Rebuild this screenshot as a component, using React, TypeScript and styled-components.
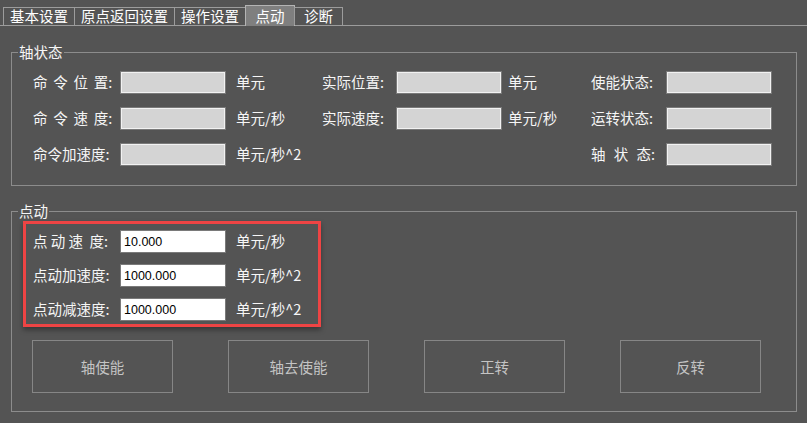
import React from "react";
import styled, { createGlobalStyle } from "styled-components";

const GlobalStyle = createGlobalStyle`
  html, body {
    margin: 0;
    padding: 0;
    background: #545454;
  }
  body {
    font-family: "Noto Sans CJK SC", "Noto Sans", sans-serif;
  }
`;

const Window = styled.div`
  width: 807px;
  height: 423px;
  box-sizing: border-box;
  padding-top: 5px;
  background: #545454;
  color: #f6f6f6;
  font-size: 14.5px;
  overflow: hidden;
`;

const TabBar = styled.div`
  display: flex;
  align-items: flex-end;
  height: 20px;
  padding-left: 3px;
  border-bottom: 1px solid #9c9c9c;
`;

const Tab = styled.div<{ $active?: boolean }>`
  box-sizing: border-box;
  height: ${p => (p.$active ? 21 : 18)}px;
  margin-bottom: ${p => (p.$active ? -1 : 0)}px;
  margin-right: -1px;
  min-width: ${p => (p.$active ? 50 : 49)}px;
  padding: 0 6px;
  display: flex;
  align-items: center;
  justify-content: center;
  border: 1px solid ${p => (p.$active ? "#b4b4b4" : "#9c9c9c")};
  border-bottom: none;
  background: ${p => (p.$active ? "#7f7f7f" : "transparent")};
  color: #fff;
  line-height: 1;
  white-space: nowrap;
  position: relative;
`;

const Group = styled.fieldset<{ $top: number; $pt: number; $pb: number }>`
  box-sizing: border-box;
  width: 786px;
  min-width: 0;
  margin: ${p => p.$top}px 0 0 11px;
  padding: ${p => p.$pt}px 0 ${p => p.$pb}px 6px;
  border: 1px solid #8c8c8c;
`;

const Legend = styled.legend`
  padding: 0 1px;
  line-height: 16px;
  font-size: 14.5px;
  color: #f6f6f6;
`;

const StatusGrid = styled.div`
  margin-left: 15px;
  display: grid;
  grid-template-columns: 87px 106px 96px 74px 106px 89px 75px 106px;
  grid-auto-rows: 23px;
  row-gap: 13px;
  align-items: center;
`;

const Label = styled.span<{ $ws?: number }>`
  white-space: pre;
  word-spacing: ${p => p.$ws ?? 0}px;
  line-height: 1;
`;

const Unit = styled.span<{ $pad?: number }>`
  padding-left: ${p => p.$pad ?? 10}px;
  white-space: nowrap;
  line-height: 1;
`;

const Field = styled.input<{ $editable?: boolean }>`
  box-sizing: border-box;
  width: 106px;
  height: 23px;
  margin: 0;
  padding: 0 0 0 3px;
  border: 1px solid #7a7a7a;
  box-shadow: inset 0 0 0 1px ${p => (p.$editable ? "#ffffff" : "#f2f2f2")};
  background: ${p => (p.$editable ? "#ffffff" : "#d4d4d4")};
  color: #000;
  font-family: "Liberation Sans", Arial, sans-serif;
  font-size: 12.5px;
  outline: none;
`;

const Empty = styled.span``;

const Highlight = styled.div`
  box-sizing: border-box;
  width: 298px;
  margin: 0 0 0 5px;
  padding: 6px 0 3px 7px;
  border: 3px solid #ee4444;
  box-shadow: 0 3px 5px rgba(0, 0, 0, 0.35);
  display: grid;
  grid-template-columns: 87px 106px auto;
  grid-auto-rows: 23px;
  row-gap: 11px;
  align-items: center;
`;

const ButtonRow = styled.div`
  display: flex;
  gap: 55px;
  margin: 13px 0 0 14px;
`;

const ActionButton = styled.button`
  box-sizing: border-box;
  width: 141px;
  height: 53px;
  margin: 0;
  padding: 0;
  border: 1px solid #868686;
  background: transparent;
  color: #c4c4c4;
  font-family: "Noto Sans CJK SC", "Noto Sans", sans-serif;
  font-size: 14.5px;
`;

const tabs = ["基本设置", "原点返回设置", "操作设置", "点动", "诊断"];

const jogRows = [
  { label: "点 动 速  度:", value: "10.000", unit: "单元/秒" },
  { label: "点动加速度:", value: "1000.000", unit: "单元/秒^2" },
  { label: "点动减速度:", value: "1000.000", unit: "单元/秒^2" },
];

const buttons = ["轴使能", "轴去使能", "正转", "反转"];

export default function App() {
  return (
    <Window>
      <GlobalStyle />
      <TabBar>
        {tabs.map(t => (
          <Tab key={t} $active={t === "点动"}>
            {t}
          </Tab>
        ))}
      </TabBar>

      <Group $top={18} $pt={11} $pb={19}>
        <Legend>轴状态</Legend>
        <StatusGrid>
          <Label $ws={2.5}>命 令 位 置:</Label>
          <Field readOnly />
          <Unit>单元</Unit>
          <Label>实际位置:</Label>
          <Field readOnly />
          <Unit $pad={6}>单元</Unit>
          <Label>使能状态:</Label>
          <Field readOnly />

          <Label $ws={2.5}>命 令 速 度:</Label>
          <Field readOnly />
          <Unit>单元/秒</Unit>
          <Label>实际速度:</Label>
          <Field readOnly />
          <Unit $pad={6}>单元/秒</Unit>
          <Label>运转状态:</Label>
          <Field readOnly />

          <Label>命令加速度:</Label>
          <Field readOnly />
          <Unit>单元/秒^2</Unit>
          <Empty />
          <Empty />
          <Empty />
          <Label $ws={5}>轴 状 态:</Label>
          <Field readOnly />
        </StatusGrid>
      </Group>

      <Group $top={17} $pt={2} $pb={18}>
        <Legend>点动</Legend>
        <Highlight>
          {jogRows.map(r => (
            <React.Fragment key={r.label}>
              <Label>{r.label}</Label>
              <Field $editable defaultValue={r.value} />
              <Unit>{r.unit}</Unit>
            </React.Fragment>
          ))}
        </Highlight>
        <ButtonRow>
          {buttons.map(b => (
            <ActionButton key={b}>{b}</ActionButton>
          ))}
        </ButtonRow>
      </Group>
    </Window>
  );
}
